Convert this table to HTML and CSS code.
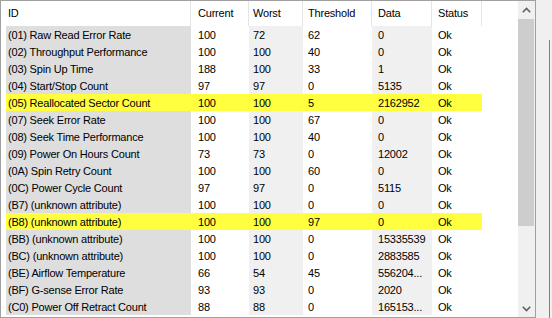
FILE: index.html
```html
<!DOCTYPE html>
<html>
<head>
<meta charset="utf-8">
<link rel="stylesheet" href="styles.css">
</head>
<body>
<div class="frame">
  <div class="list">
    <div class="table">
      <div class="row head">
        <div class="sp"></div>
        <div class="c id">ID</div>
        <div class="c cur">Current</div>
        <div class="c wor">Worst</div>
        <div class="c thr">Threshold</div>
        <div class="c dat">Data</div>
        <div class="c sta">Status</div>
      </div>
      <div class="row"><div class="sp"></div><div class="c id">(01) Raw Read Error Rate</div><div class="c cur">100</div><div class="c wor">72</div><div class="c thr">62</div><div class="c dat">0</div><div class="c sta">Ok</div></div>
      <div class="row"><div class="sp"></div><div class="c id">(02) Throughput Performance</div><div class="c cur">100</div><div class="c wor">100</div><div class="c thr">40</div><div class="c dat">0</div><div class="c sta">Ok</div></div>
      <div class="row"><div class="sp"></div><div class="c id">(03) Spin Up Time</div><div class="c cur">188</div><div class="c wor">100</div><div class="c thr">33</div><div class="c dat">1</div><div class="c sta">Ok</div></div>
      <div class="row"><div class="sp"></div><div class="c id">(04) Start/Stop Count</div><div class="c cur">97</div><div class="c wor">97</div><div class="c thr">0</div><div class="c dat">5135</div><div class="c sta">Ok</div></div>
      <div class="row warn"><div class="sp"></div><div class="c id">(05) Reallocated Sector Count</div><div class="c cur">100</div><div class="c wor">100</div><div class="c thr">5</div><div class="c dat">2162952</div><div class="c sta">Ok</div></div>
      <div class="row"><div class="sp"></div><div class="c id">(07) Seek Error Rate</div><div class="c cur">100</div><div class="c wor">100</div><div class="c thr">67</div><div class="c dat">0</div><div class="c sta">Ok</div></div>
      <div class="row"><div class="sp"></div><div class="c id">(08) Seek Time Performance</div><div class="c cur">100</div><div class="c wor">100</div><div class="c thr">40</div><div class="c dat">0</div><div class="c sta">Ok</div></div>
      <div class="row"><div class="sp"></div><div class="c id">(09) Power On Hours Count</div><div class="c cur">73</div><div class="c wor">73</div><div class="c thr">0</div><div class="c dat">12002</div><div class="c sta">Ok</div></div>
      <div class="row"><div class="sp"></div><div class="c id">(0A) Spin Retry Count</div><div class="c cur">100</div><div class="c wor">100</div><div class="c thr">60</div><div class="c dat">0</div><div class="c sta">Ok</div></div>
      <div class="row"><div class="sp"></div><div class="c id">(0C) Power Cycle Count</div><div class="c cur">97</div><div class="c wor">97</div><div class="c thr">0</div><div class="c dat">5115</div><div class="c sta">Ok</div></div>
      <div class="row"><div class="sp"></div><div class="c id">(B7) (unknown attribute)</div><div class="c cur">100</div><div class="c wor">100</div><div class="c thr">0</div><div class="c dat">0</div><div class="c sta">Ok</div></div>
      <div class="row warn"><div class="sp"></div><div class="c id">(B8) (unknown attribute)</div><div class="c cur">100</div><div class="c wor">100</div><div class="c thr">97</div><div class="c dat">0</div><div class="c sta">Ok</div></div>
      <div class="row"><div class="sp"></div><div class="c id">(BB) (unknown attribute)</div><div class="c cur">100</div><div class="c wor">100</div><div class="c thr">0</div><div class="c dat">15335539</div><div class="c sta">Ok</div></div>
      <div class="row"><div class="sp"></div><div class="c id">(BC) (unknown attribute)</div><div class="c cur">100</div><div class="c wor">100</div><div class="c thr">0</div><div class="c dat">2883585</div><div class="c sta">Ok</div></div>
      <div class="row"><div class="sp"></div><div class="c id">(BE) Airflow Temperature</div><div class="c cur">66</div><div class="c wor">54</div><div class="c thr">45</div><div class="c dat">556204...</div><div class="c sta">Ok</div></div>
      <div class="row"><div class="sp"></div><div class="c id">(BF) G-sense Error Rate</div><div class="c cur">93</div><div class="c wor">93</div><div class="c thr">0</div><div class="c dat">2020</div><div class="c sta">Ok</div></div>
      <div class="row"><div class="sp"></div><div class="c id">(C0) Power Off Retract Count</div><div class="c cur">88</div><div class="c wor">88</div><div class="c thr">0</div><div class="c dat">165153...</div><div class="c sta">Ok</div></div>
    </div>
    <div class="vscroll">
      <div class="arrow">
        <svg width="9" height="6" viewBox="0 0 9 6"><path d="M0.8 5.2 L4.5 1.5 L8.2 5.2" fill="none" stroke="#606060" stroke-width="1.6"/></svg>
      </div>
      <div class="track"><div class="thumb"></div></div>
      <div class="arrow">
        <svg width="9" height="6" viewBox="0 0 9 6"><path d="M0.8 0.8 L4.5 4.5 L8.2 0.8" fill="none" stroke="#606060" stroke-width="1.6"/></svg>
      </div>
    </div>
  </div>
  <div class="side"><div class="edge"></div></div>
</div>
</body>
</html>
```

FILE: styles.css
```css
html, body {
  margin: 0;
  padding: 0;
}
body {
  background: #f0f0f0;
  width: 552px;
  height: 318px;
  overflow: hidden;
  font-family: "Liberation Sans", Arial, sans-serif;
  font-size: 11px;
  letter-spacing: -0.2px;
  color: #000;
}
.frame {
  display: flex;
  height: 318px;
}
.list {
  width: 536px;
  height: 318px;
  box-sizing: border-box;
  border: 1px solid #a0a0a0;
  background: #fff;
  display: flex;
}
.table {
  flex: 1;
  display: flex;
  flex-direction: column;
}
.row {
  display: grid;
  grid-template-columns: 5px 185px 58px 54px 69px 60px 50px;
  height: 17px;
  align-items: stretch;
}
.row.head {
  height: 25px;
}
.c {
  white-space: nowrap;
  overflow: hidden;
  line-height: 17px;
  padding-top: 1px;
  box-sizing: border-box;
}
.head .c {
  line-height: 25px;
  padding-top: 0;
  border-right: 1px solid #e5e5e5;
}
.c.id { padding-left: 2px; }
.c.cur { padding-left: 7px; }
.c.wor { padding-left: 4px; }
.c.thr { padding-left: 5px; }
.c.dat { padding-left: 6px; }
.c.sta { padding-left: 6px; }
.row:not(.head) .c.id { background: #dedede; }
.row:not(.head) .c.wor,
.row:not(.head) .c.dat { background: #f0f0f0; }
.row.warn .c { background: #ffff40 !important; }
.vscroll {
  width: 17px;
  background: #f0f0f0;
  display: flex;
  flex-direction: column;
}
.arrow {
  height: 17px;
  display: flex;
  align-items: center;
  justify-content: center;
}
.track {
  flex: 1;
  display: flex;
  flex-direction: column;
}
.thumb {
  margin: 1px 1px 0 0;
  height: 207px;
  background: #cdcdcd;
}
.side {
  flex: 1;
  display: flex;
  justify-content: flex-end;
  padding-right: 2px;
}
.edge {
  width: 1px;
  margin-top: 40px;
  background: #808080;
}
```
